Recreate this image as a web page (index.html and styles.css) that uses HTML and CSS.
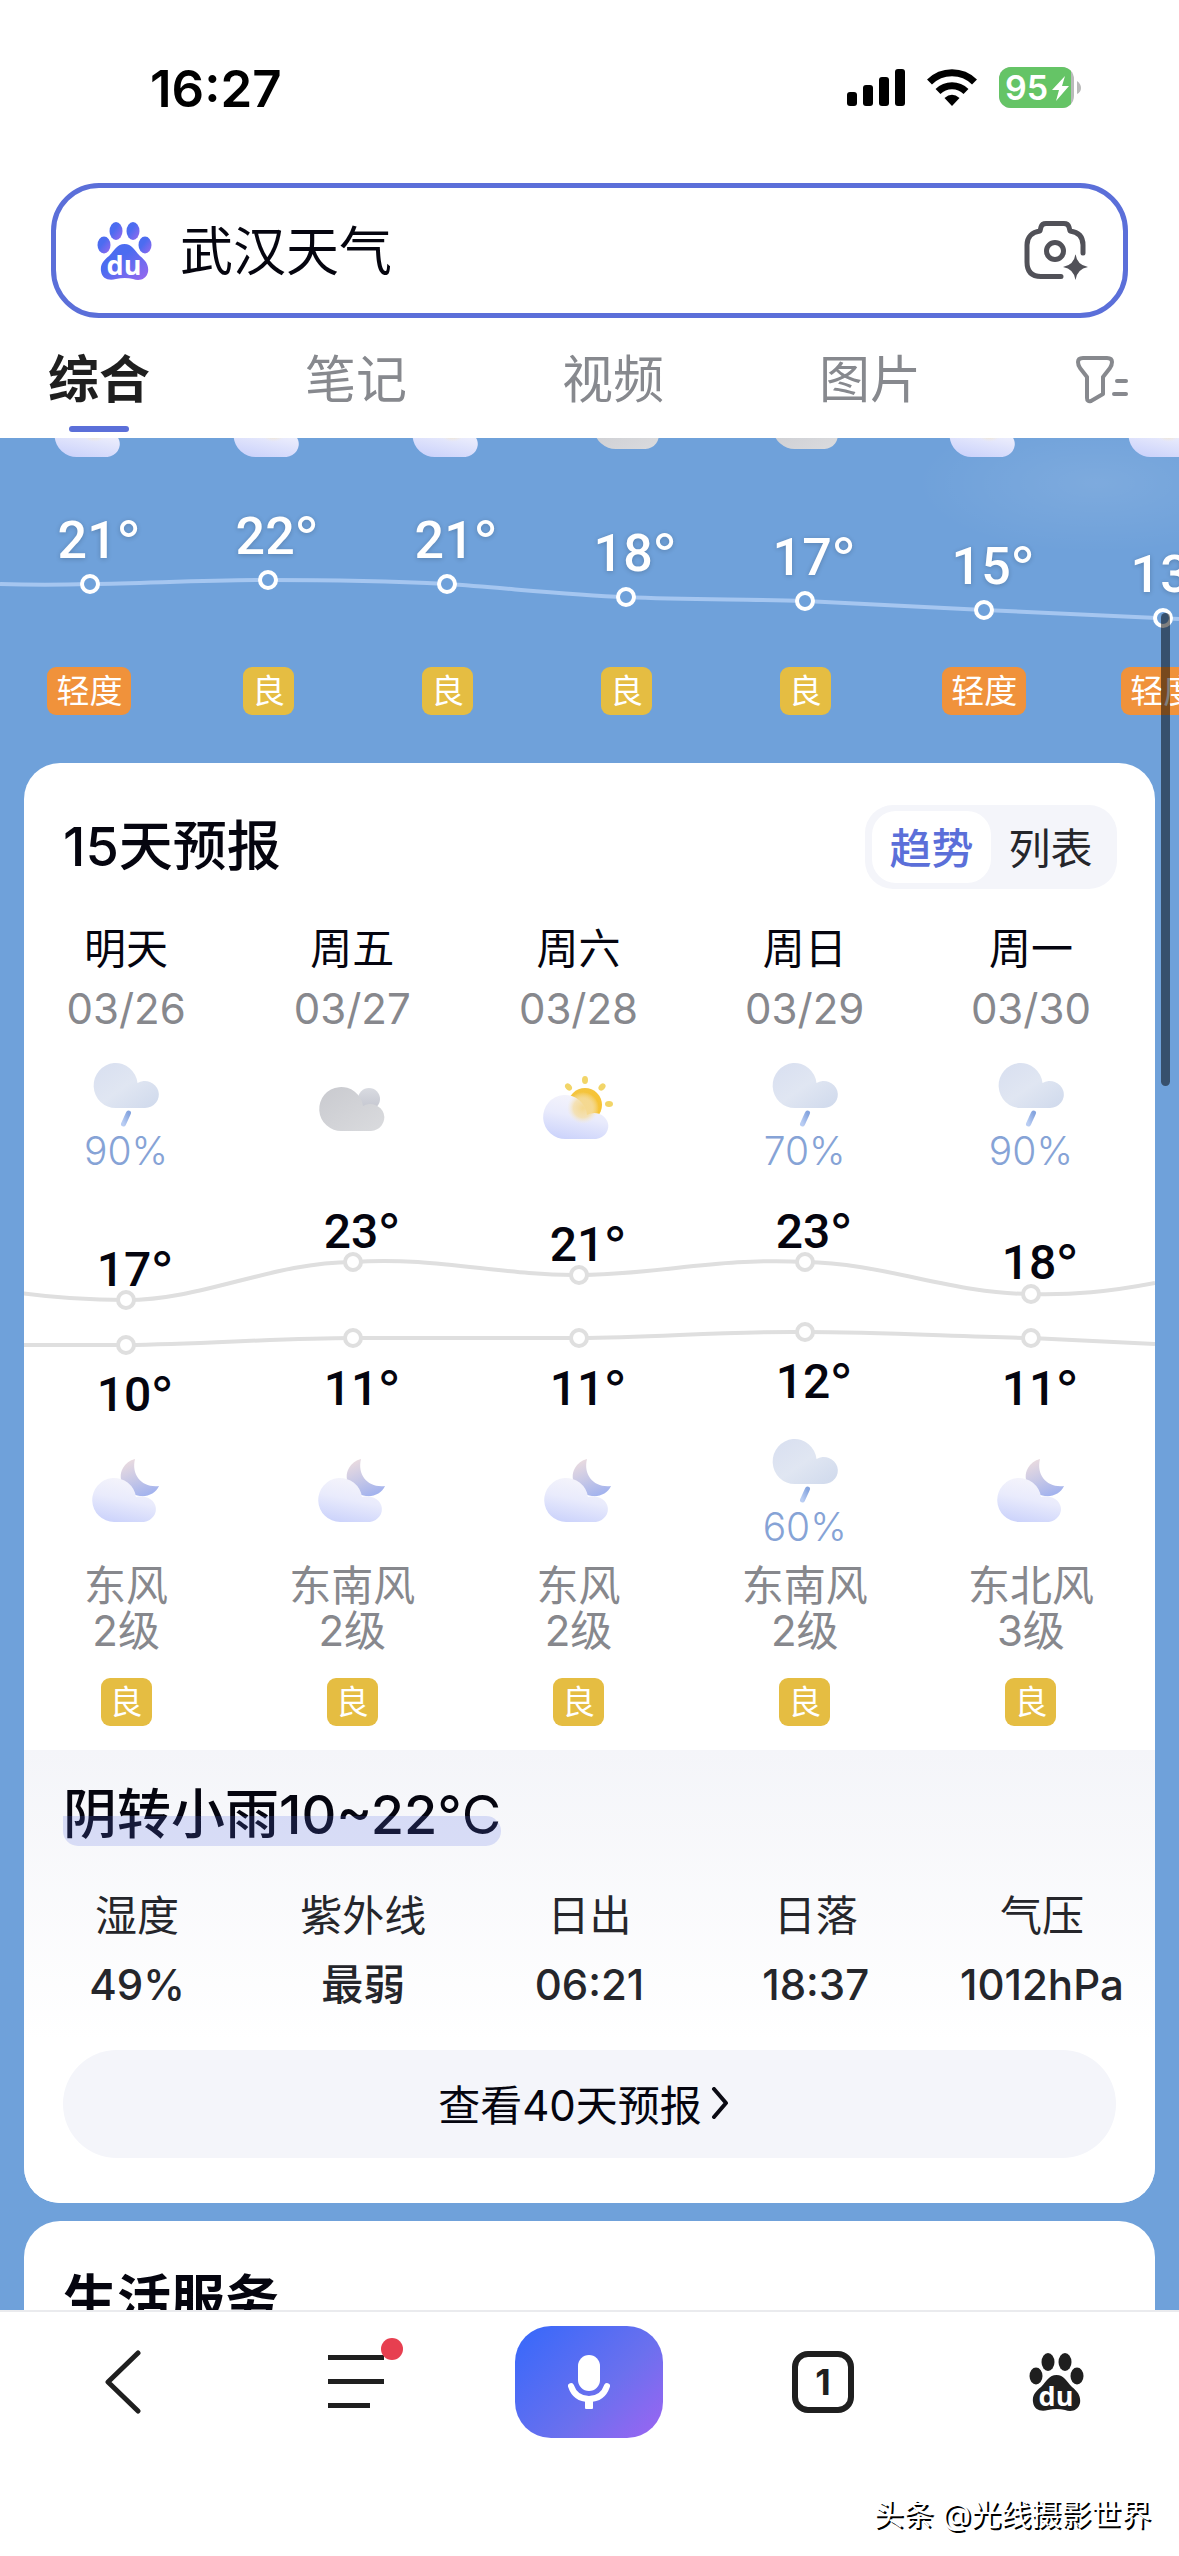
FILE: index.html
```html
<!DOCTYPE html>
<html lang="zh-CN">
<head>
  <meta charset="UTF-8" />
  <meta name="viewport" content="width=device-width, initial-scale=1" />
  <title>武汉天气</title>
  <link rel="stylesheet" href="styles.css">
</head>
<body>

<!-- shared icons -->
<svg class="sprite" aria-hidden="true">
  <defs>
    <linearGradient id="gRain" x1="0" y1="0" x2="1" y2="1">
      <stop offset="0" stop-color="#d8dff0" />
      <stop offset="0.5" stop-color="#e0e6f2" />
      <stop offset="1" stop-color="#cfd9ec" />
    </linearGradient>
    <linearGradient id="gDrop" x1="1" y1="0" x2="0" y2="1">
      <stop offset="0" stop-color="#86a5df" />
      <stop offset="1" stop-color="#b9cdf3" />
    </linearGradient>
    <linearGradient id="gGrey" x1="0" y1="0" x2="1" y2="1">
      <stop offset="0" stop-color="#c9cacf" />
      <stop offset="1" stop-color="#dadbde" />
    </linearGradient>
    <linearGradient id="gBack" x1="0" y1="0" x2="0" y2="1">
      <stop offset="0" stop-color="#d9dbe1" />
      <stop offset="1" stop-color="#c3c5cf" />
    </linearGradient>
    <linearGradient id="gLight" x1="0.7" y1="0" x2="0.4" y2="1">
      <stop offset="0" stop-color="#f6f5fb" />
      <stop offset="0.5" stop-color="#e9ebfc" />
      <stop offset="1" stop-color="#cdd4fb" />
    </linearGradient>
    <linearGradient id="gSun" x1="0" y1="0" x2="1" y2="1">
      <stop offset="0" stop-color="#f3c542" />
      <stop offset="1" stop-color="#f8c22f" />
    </linearGradient>
    <radialGradient id="gGlow">
      <stop offset="0" stop-color="#f5d88f" />
      <stop offset="0.6" stop-color="#f5dea6" stop-opacity="0.8" />
      <stop offset="1" stop-color="#f3ecdf" stop-opacity="0" />
    </radialGradient>
    <linearGradient id="gMoon" x1="0.2" y1="0" x2="0.6" y2="1">
      <stop offset="0" stop-color="#ecdcdf" />
      <stop offset="0.5" stop-color="#c9c9e6" />
      <stop offset="1" stop-color="#a3b3ee" />
    </linearGradient>
    <linearGradient id="gPaw" x1="0" y1="0" x2="1" y2="1">
      <stop offset="0.4" stop-color="#4c6cf0" />
      <stop offset="1" stop-color="#9a68ee" />
    </linearGradient>
  </defs>

  <symbol id="rain" viewBox="0 0 80 72">
    <path fill="url(#gRain)" d="M30 49A22 22.500 0 1 1 51.500 24A14 13.500 0 1 1 59 49Z" />
    <path stroke="url(#gDrop)" stroke-width="5" stroke-linecap="round" d="M42.500 54L37.500 65" />
  </symbol>
  <symbol id="cloudy" viewBox="0 0 80 90">
    <circle cx="57" cy="40" r="11" fill="url(#gBack)" />
    <path fill="url(#gGrey)" d="M30 72A22 22 0 1 1 51 47A14 13.500 0 1 1 59 72Z" />
  </symbol>
  <symbol id="sunny" viewBox="0 0 80 90">
    <g fill="#f2d568">
      <ellipse cx="47" cy="21" rx="3" ry="4" />
      <ellipse cx="30.500" cy="28" rx="3" ry="4" transform="rotate(-42 30.500 28)" />
      <ellipse cx="64" cy="28" rx="3" ry="4" transform="rotate(42 64 28)" />
      <ellipse cx="71" cy="45" rx="4" ry="3" />
    </g>
    <circle cx="47" cy="46" r="17" fill="url(#gSun)" />
    <path fill="url(#gLight)" d="M28 80A22 22 0 1 1 49 56A14 13 0 1 1 58 80Z" />
    <circle cx="45" cy="49" r="16" fill="url(#gGlow)" />
  </symbol>
  <symbol id="night" viewBox="0 0 80 90">
    <path fill="url(#gMoon)" d="M49 24C45 40 56 53 73 51C70 58 62 62 54 61C40 59 30 45 37 33Q41 26 49 24Z" />
    <path fill="url(#gLight)" d="M28 87A22 22 0 1 1 50 62A15 13 0 1 1 58 87Z" />
  </symbol>
  <symbol id="paw" viewBox="0 0 55 58">
    <ellipse cx="19" cy="9" rx="6.500" ry="9" />
    <ellipse cx="36" cy="9" rx="6.500" ry="9" />
    <ellipse cx="7" cy="23" rx="6.500" ry="8.500" />
    <ellipse cx="48" cy="23" rx="6.500" ry="8.500" />
    <path d="M27.500 22C35 22 37 28 43 34C49 39 52 43 51 50C49 58 42 59 36 57Q28 55 19 57C12 59 5 57 4 49C3 42 7 38 12 34C18 28 20 22 27.500 22Z" />
  </symbol>
</svg>

<header class="top">
  <div class="status-bar">
    <time>16:27</time>
    <div class="status-icons">
      <svg width="58" height="38" viewBox="0 0 58 38">
        <rect x="0" y="23" width="10" height="14" rx="3" />
        <rect x="16" y="16" width="10" height="21" rx="3" />
        <rect x="32" y="8" width="10" height="29" rx="3" />
        <rect x="48" y="0" width="10" height="37" rx="3" />
      </svg>
      <svg width="50" height="38" viewBox="0 0 50 38">
        <path fill="none" stroke="#000" stroke-width="7" d="M2.500 13A32 32 0 0 1 47.500 13" />
        <path fill="none" stroke="#000" stroke-width="7" d="M11 22.500A20 20 0 0 1 39 22.500" />
        <path d="M17.500 29Q25 22.500 32.500 29L25 37Z" />
      </svg>
      <svg width="82" height="42" viewBox="0 0 82 42">
        <clipPath id="battery"><rect width="75" height="41" rx="12" /></clipPath>
        <g clip-path="url(#battery)">
          <rect width="75" height="41" fill="#b9bab9" />
          <rect width="72" height="41" fill="#65c466" />
        </g>
        <path fill="#b9bab9" d="M78 14Q82 17 82 21T78 27Z" />
        <text x="6" y="33" class="battery-text">95</text>
        <path fill="#fff" d="M66 9L53 23H60L57 34L70 19H63Z" />
      </svg>
    </div>
  </div>

  <form class="search" role="search">
    <svg width="55" height="58" fill="url(#gPaw)">
      <use href="#paw" />
      <text x="27" y="53" class="paw-text">du</text>
    </svg>
    <input type="text" value="武汉天气" aria-label="搜索">
    <button type="button" class="plain" aria-label="拍照搜索">
      <svg width="66" height="60" viewBox="0 0 66 60" fill="none" stroke="#515158" stroke-width="5" stroke-linecap="round" stroke-linejoin="round">
        <path d="M59 32V24C59 15 54 11 46 10L45 6Q44 2.500 40 2.500H22Q18 2.500 17 6L16 10C8 11 3 16 3 24V41Q3 55.500 17 55.500H37" />
        <circle cx="31" cy="30" r="8.500" />
        <path fill="#515158" stroke="none" d="M51.500 33Q53 44 64 46Q53 48 51.500 59Q50 48 39 46Q50 44 51.500 33Z" />
      </svg>
    </button>
  </form>

  <nav class="tabs">
    <a href="#" class="active">综合</a>
    <a href="#">笔记</a>
    <a href="#">视频</a>
    <a href="#">图片</a>
    <button type="button" class="plain" aria-label="筛选">
      <svg width="52" height="48" viewBox="0 0 52 48" fill="none" stroke="#87898e" stroke-width="4" stroke-linecap="round" stroke-linejoin="round">
        <path d="M7 2H31Q36 2 36 6Q36 9 34 12L27 21V38L15 45Q11 46 11 42V21L4 12Q2 9 2 6Q2 2 7 2Z" />
        <path d="M41 25H50M38 38H50" />
      </svg>
    </button>
  </nav>
</header>

<main class="weather">
  <section class="hourly">
    <div class="hour-row hour-icons">
      <svg><use href="#sunny" /></svg>
      <svg><use href="#sunny" /></svg>
      <svg><use href="#sunny" /></svg>
      <svg><use href="#cloudy" /></svg>
      <svg><use href="#cloudy" /></svg>
      <svg><use href="#sunny" /></svg>
      <svg><use href="#sunny" /></svg>
    </div>
    <svg class="hour-chart" viewBox="0 0 1179 200">
      <path class="line" d="M0 117C30 118 60 118 90 117C150 116 209 113 268 113C328 113 388 114 447 117C507 121 567 128 626 130C686 133 745 132 805 134C865 137 924 140 984 143L1179 152" />
      <g class="dots">
        <circle cx="90" cy="117" r="8" />
        <circle cx="268" cy="113" r="8" />
        <circle cx="447" cy="117" r="8" />
        <circle cx="626" cy="130" r="8" />
        <circle cx="805" cy="134" r="8" />
        <circle cx="984" cy="143" r="8" />
        <circle cx="1163" cy="151" r="8" />
      </g>
      <g class="temps">
        <text x="99" y="91">21<tspan>°</tspan></text>
        <text x="277" y="87">22<tspan>°</tspan></text>
        <text x="456" y="91">21<tspan>°</tspan></text>
        <text x="635" y="104">18<tspan>°</tspan></text>
        <text x="814" y="108">17<tspan>°</tspan></text>
        <text x="993" y="117">15<tspan>°</tspan></text>
        <text x="1172" y="125">13<tspan>°</tspan></text>
      </g>
    </svg>
    <div class="hour-row">
      <div><span class="aqi light">轻度</span></div>
      <div><span class="aqi">良</span></div>
      <div><span class="aqi">良</span></div>
      <div><span class="aqi">良</span></div>
      <div><span class="aqi">良</span></div>
      <div><span class="aqi light">轻度</span></div>
      <div><span class="aqi light">轻度</span></div>
    </div>
  </section>

  <section class="card">
    <div class="card-head">
      <h2>15天预报</h2>
      <div class="switch">
        <button type="button" class="on">趋势</button>
        <button type="button">列表</button>
      </div>
    </div>

    <div class="forecast">
      <div class="days">
        <div class="day">
          <b>明天</b><span class="date">03/26</span>
          <svg class="icon"><use href="#rain" height="72" /></svg>
          <span class="pct">90%</span>
        </div>
        <div class="day">
          <b>周五</b><span class="date">03/27</span>
          <svg class="icon"><use href="#cloudy" height="90" /></svg>
        </div>
        <div class="day">
          <b>周六</b><span class="date">03/28</span>
          <svg class="icon"><use href="#sunny" height="90" /></svg>
        </div>
        <div class="day">
          <b>周日</b><span class="date">03/29</span>
          <svg class="icon"><use href="#rain" height="72" /></svg>
          <span class="pct">70%</span>
        </div>
        <div class="day">
          <b>周一</b><span class="date">03/30</span>
          <svg class="icon"><use href="#rain" height="72" /></svg>
          <span class="pct">90%</span>
        </div>
      </div>

      <svg class="day-chart" viewBox="0 0 1131 264">
        <path class="line" d="M0 121C40 127 70 129 113 129C190 129 260 91 340 91C420 85 490 105 566 104C640 104 710 86 792 91C870 92 940 123 1018 123C1060 124 1095 121 1142 112" />
        <path class="line" d="M0 174H113C190 173 270 167 340 167H566C640 167 710 160 792 161C870 161 950 166 1018 167L1142 173" />
        <g class="dots">
          <circle cx="113" cy="129" r="8" />
          <circle cx="340" cy="91" r="8" />
          <circle cx="566" cy="104" r="8" />
          <circle cx="792" cy="91" r="8" />
          <circle cx="1018" cy="123" r="8" />
          <circle cx="113" cy="174" r="8" />
          <circle cx="340" cy="167" r="8" />
          <circle cx="566" cy="167" r="8" />
          <circle cx="792" cy="161" r="8" />
          <circle cx="1018" cy="167" r="8" />
        </g>
        <g class="temps">
          <text x="122" y="115">17<tspan>°</tspan></text>
          <text x="349" y="77">23<tspan>°</tspan></text>
          <text x="575" y="90">21<tspan>°</tspan></text>
          <text x="801" y="77">23<tspan>°</tspan></text>
          <text x="1027" y="108">18<tspan>°</tspan></text>
          <text x="122" y="240">10<tspan>°</tspan></text>
          <text x="349" y="234">11<tspan>°</tspan></text>
          <text x="575" y="234">11<tspan>°</tspan></text>
          <text x="801" y="227">12<tspan>°</tspan></text>
          <text x="1027" y="234">11<tspan>°</tspan></text>
        </g>
      </svg>

      <div class="days nights">
        <div class="day">
          <svg class="icon"><use href="#night" height="90" /></svg>
          <p>东风<br>2级</p><span class="aqi">良</span>
        </div>
        <div class="day">
          <svg class="icon"><use href="#night" height="90" /></svg>
          <p>东南风<br>2级</p><span class="aqi">良</span>
        </div>
        <div class="day">
          <svg class="icon"><use href="#night" height="90" /></svg>
          <p>东风<br>2级</p><span class="aqi">良</span>
        </div>
        <div class="day">
          <svg class="icon"><use href="#rain" height="72" /></svg>
          <span class="pct">60%</span>
          <p>东南风<br>2级</p><span class="aqi">良</span>
        </div>
        <div class="day">
          <svg class="icon"><use href="#night" height="90" /></svg>
          <p>东北风<br>3级</p><span class="aqi">良</span>
        </div>
      </div>
    </div>

    <div class="detail">
      <h2 class="summary">阴转小雨10~22<span>°C</span></h2>
      <dl class="stats">
        <div><dt>湿度</dt><dd>49%</dd></div>
        <div><dt>紫外线</dt><dd>最弱</dd></div>
        <div><dt>日出</dt><dd>06:21</dd></div>
        <div><dt>日落</dt><dd>18:37</dd></div>
        <div><dt>气压</dt><dd>1012hPa</dd></div>
      </dl>
      <button type="button" class="more">
        查看40天预报
        <svg width="18" height="32" viewBox="0 0 18 32" fill="none" stroke="#0b0b14" stroke-width="4" stroke-linecap="round" stroke-linejoin="round"><path d="M3 2L15 16L3 30" /></svg>
      </button>
    </div>
  </section>

  <section class="card">
    <h2 class="service-title">生活服务</h2>
  </section>
</main>

<div class="scroll-thumb"></div>

<nav class="toolbar">
  <button type="button" class="plain" aria-label="返回">
    <svg width="36" height="64" viewBox="0 0 36 64" fill="none" stroke="#1f1f1f" stroke-width="5" stroke-linecap="round" stroke-linejoin="round"><path d="M33 3L3 32L33 61" /></svg>
  </button>
  <button type="button" class="plain" aria-label="菜单">
    <span class="menu-icon">
      <svg width="56" height="54" viewBox="0 0 56 54" fill="#1f1f1f">
        <rect width="56" height="5" /><rect y="24" width="56" height="5" /><rect y="48" width="42" height="5" />
      </svg>
      <i class="red-dot"></i>
    </span>
  </button>
  <button type="button" class="plain" aria-label="语音">
    <span class="mic">
      <svg width="42" height="54" viewBox="0 0 42 54">
        <rect x="10" width="22" height="36" rx="11" fill="#fff" />
        <path fill="none" stroke="#fff" stroke-width="6" stroke-linecap="round" d="M3 31C6 40 13 44 21 44S36 40 39 31" />
        <rect x="17" y="44" width="8" height="10" rx="1" fill="#fff" />
      </svg>
    </span>
  </button>
  <button type="button" class="plain" aria-label="窗口"><span class="windows">1</span></button>
  <button type="button" class="plain" aria-label="首页">
    <svg width="55" height="58" fill="#1f1f1f">
      <use href="#paw" />
      <text x="27" y="53" class="paw-text">du</text>
    </svg>
  </button>
  <span class="watermark">头条 @光线摄影世界</span>
</nav>

</body>
</html>
```
FILE: styles.css
```css
* { box-sizing: border-box; }
html, body {
  margin: 0;
  height: 100%;
}
body {
  display: flex;
  flex-direction: column;
  overflow: hidden;
  background: #fff;
  color: #05050f;
  font-family: Inter, 'Noto Sans CJK SC', sans-serif;
  font-size: 42px;
}
svg { display: block; flex: none; }
h2, p, dl, dd { margin: 0; }
h2 {
  font-size: 54px;
  font-weight: 500;
  line-height: 60px;
}
button, input {
  font: inherit;
  color: inherit;
  border: none;
  background: none;
  padding: 0;
}
.plain {
  display: flex;
  align-items: center;
  justify-content: center;
}
.sprite {
  position: absolute;
  width: 0;
  height: 0;
}
.paw-text {
  font: 700 27px 'Open Sans', sans-serif;
  text-anchor: middle;
  fill: #fff;
}

/* header */
.top { flex: none; }
.status-bar {
  display: flex;
  justify-content: space-between;
  align-items: center;
  height: 60px;
  margin: 58px 98px 65px 150px;
  color: #000;
}
.status-bar time {
  font-size: 51px;
  font-weight: 600;
}
.status-icons {
  display: flex;
  align-items: center;
  gap: 22px;
}
.battery-text {
  font-size: 34px;
  font-weight: 600;
  fill: #fff;
}
.search {
  display: flex;
  align-items: center;
  height: 135px;
  margin: 0 51px;
  padding: 0 33px 0 41px;
  border: 5px solid #5b6fd9;
  border-radius: 48px;
}
.search input {
  flex: 1;
  min-width: 0;
  margin: 0 28px;
  padding-bottom: 6px;
  font-size: 53px;
  outline: none;
}
.tabs {
  display: flex;
  justify-content: space-between;
  align-items: center;
  height: 120px;
  padding: 4px 51px 0 48px;
  font-size: 51px;
}
.tabs a {
  position: relative;
  line-height: 116px;
  color: #87898e;
  text-decoration: none;
}
.tabs a.active {
  color: #1f1f1f;
  font-weight: 700;
}
.tabs a.active::after {
  content: '';
  position: absolute;
  left: 50%;
  bottom: 6px;
  width: 60px;
  height: 6px;
  margin-left: -30px;
  border-radius: 3px;
  background: #5b6fd9;
}

/* weather */
.weather {
  flex: 1;
  min-height: 0;
  overflow: hidden;
  background: radial-gradient(ellipse 180px 70px at 93% 45px, rgba(255,255,255,0.1), rgba(255,255,255,0)) #6fa1da;
}
.hourly {
  padding-bottom: 48px;
  overflow: hidden;
}
.hour-row { display: flex; }
.hour-row > * {
  flex: 0 0 15.18%;
  width: 15.18%;
  display: flex;
  justify-content: center;
}
.hour-icons {
  height: 29px;
  align-items: flex-end;
  overflow: hidden;
}
.hour-icons svg { height: 90px; }
.hour-chart, .day-chart { width: 100%; }
.line {
  fill: none;
  stroke: #a5c6f0;
  stroke-width: 4;
}
.dots circle {
  fill: #6fa1da;
  stroke: #fff;
  stroke-width: 4;
}
.temps text {
  font: 500 52px Roboto, sans-serif;
  fill: #fff;
  text-anchor: middle;
}
.temps tspan {
  font-family: Inter, sans-serif;
  font-weight: 400;
}
.hour-chart .temps text { text-shadow: 0 1px 5px rgba(0,0,0,0.2); }
.aqi {
  display: block;
  height: 48px;
  padding: 0 9px;
  border-radius: 9px;
  background: #e5bd42;
  color: #fff;
  font-size: 33px;
  line-height: 48px;
}
.aqi.light { background: #f0923b; }

.card {
  margin: 0 24px 18px;
  border-radius: 36px;
  background: #fff;
  overflow: hidden;
}
.card-head {
  display: flex;
  justify-content: space-between;
  align-items: center;
  padding: 42px 38px 30px 39px;
}
.switch {
  display: flex;
  padding: 6px 7px;
  border-radius: 28px;
  background: #f4f5fa;
}
.switch button {
  height: 72px;
  width: 119px;
  padding-bottom: 3px;
  border-radius: 24px;
  color: #25262b;
}
.switch .on {
  background: #fff;
  color: #5b6fd9;
  font-weight: 500;
}

/* the list of days is scrolled a little to the left */
.forecast { margin: 0 11px 0 -11px; }
.days {
  display: grid;
  grid-template-columns: repeat(5, 1fr);
}
.day {
  display: flex;
  flex-direction: column;
  align-items: center;
}
.day b {
  font-weight: 400;
  line-height: 60px;
}
.date {
  color: #87888d;
  line-height: 60px;
}
.icon {
  width: 80px;
  height: 72px;
  margin-top: 20px;
  overflow: visible;
}
.pct {
  color: #86a3d6;
  font-size: 39px;
  font-weight: 300;
  line-height: 40px;
}
.day-chart { overflow: visible; }
.day-chart .line { stroke: #dfdfdf; }
.day-chart .dots circle {
  fill: #fff;
  stroke: #dfdfdf;
}
.day-chart .temps text {
  font-size: 48px;
  fill: #05050f;
}
.nights { padding-bottom: 24px; }
.nights .icon { margin-top: 0; }
.nights .pct { margin-bottom: 16px; }
.day p {
  margin: auto 0 25px;
  color: #87888d;
  line-height: 45px;
  text-align: center;
}

.detail {
  padding: 35px 39px 45px;
  background: linear-gradient(#f4f5f9, #fff 290px);
}
.summary {
  position: relative;
  display: block;
  width: fit-content;
}
.summary span { font-weight: 400; }
.summary::after {
  content: '';
  position: absolute;
  left: 0;
  right: 0;
  bottom: -1px;
  height: 30px;
  border-radius: 0 15px 15px 15px;
  background: rgba(91,111,230,0.2);
}
.stats {
  display: grid;
  grid-template-columns: repeat(5, 1fr);
  margin: 36px -39px 31px;
  color: #25262b;
  line-height: 69px;
  text-align: center;
}
.stats dd { font-weight: 500; }
.more {
  display: flex;
  align-items: center;
  justify-content: center;
  gap: 9px;
  width: 100%;
  height: 108px;
  padding: 0 12px 3px 0;
  border-radius: 54px;
  background: #f4f5fa;
}
.service-title {
  padding: 42px 39px;
  font-weight: 700;
  line-height: 76px;
}

.scroll-thumb {
  position: fixed;
  top: 613px;
  right: 9px;
  width: 9px;
  height: 473px;
  border-radius: 5px;
  background: rgba(0,0,0,0.5);
}

/* bottom bar */
.toolbar {
  position: relative;
  flex: none;
  display: grid;
  grid-template-columns: repeat(5, 1fr);
  align-items: start;
  height: 246px;
  padding: 14px 6px 0;
  border-top: 2px solid #eaebee;
  background: #fff;
}
.toolbar button { height: 112px; }
.menu-icon { position: relative; }
.red-dot {
  position: absolute;
  top: -17px;
  right: -19px;
  width: 22px;
  height: 22px;
  border-radius: 50%;
  background: #e73f50;
}
.mic {
  display: flex;
  align-items: center;
  justify-content: center;
  width: 148px;
  height: 112px;
  border-radius: 36px;
  background: linear-gradient(135deg, #3568fb, #6b70ee 60%, #9d64f2);
}
.windows {
  width: 62px;
  height: 62px;
  border: 6px solid #1f1f1f;
  border-radius: 16px;
  color: #1f1f1f;
  font-size: 36px;
  font-weight: 700;
  line-height: 50px;
}
.watermark {
  position: absolute;
  right: 28px;
  bottom: 22px;
  color: #fff;
  font-size: 30px;
  line-height: 40px;
  text-shadow: 2px 2px 0 #000;
}
```
